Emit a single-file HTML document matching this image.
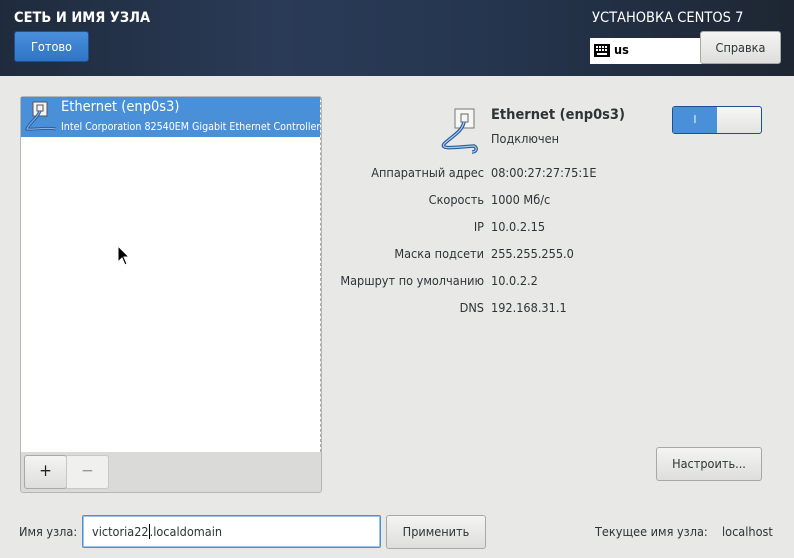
<!DOCTYPE html>
<html><head><meta charset="utf-8"><style>
*{margin:0;padding:0;box-sizing:border-box}
body{width:794px;height:558px;overflow:hidden;background:#e8e8e7;font-family:"DejaVu Sans Condensed","DejaVu Sans","Liberation Sans",sans-serif;font-stretch:condensed;color:#2e3436;position:relative;font-size:12.6px}
.a{position:absolute;white-space:nowrap}
#hdr{position:absolute;left:0;top:0;width:794px;height:76px;background:linear-gradient(90deg,#1f2b3d 0%,#2a3b57 35%,#253650 60%,#1e2632 100%)}
.btn{position:absolute;border:1px solid #a8a8a5;border-radius:3px;background:linear-gradient(#f4f4f3,#dededc);text-align:center;color:#2e3436;font-size:12.6px}
.lbl{position:absolute;right:310px;text-align:right;white-space:nowrap}
.val{position:absolute;left:491px;white-space:nowrap}
</style></head><body>
<div id="hdr"></div>
<div class="a" style="left:14px;top:10px;color:#fff;font-size:14.5px;font-weight:bold">СЕТЬ И ИМЯ УЗЛА</div>
<div class="a" style="left:14px;top:31px;width:75px;height:31px;background:linear-gradient(#4a8fdc,#2f74c6);border:1px solid #1f4f8f;border-radius:3px;color:#fff;text-align:center;line-height:29px">Готово</div>
<div class="a" style="left:592px;top:10px;color:#fff;font-size:14.5px">УСТАНОВКА CENTOS 7</div>
<div class="a" style="left:590px;top:38px;width:112px;height:26px;background:#fff"></div>
<svg class="a" style="left:594px;top:44px" width="16" height="13"><rect width="16" height="13" fill="#000"/><g fill="#fff"><rect x="2" y="2" width="2" height="2"/><rect x="5" y="2" width="2" height="2"/><rect x="8" y="2" width="2" height="2"/><rect x="11" y="2" width="2" height="2"/><rect x="2" y="5" width="2" height="2"/><rect x="5" y="5" width="2" height="2"/><rect x="8" y="5" width="2" height="2"/><rect x="11" y="5" width="2" height="2"/><rect x="3" y="9" width="10" height="2"/></g></svg>
<div class="a" style="left:614px;top:42px;font-weight:bold;color:#000">us</div>
<div class="btn" style="left:700px;top:31px;width:81px;height:33px;line-height:31px">Справка</div>

<div class="a" style="left:20px;top:96px;width:302px;height:397px;border:1px solid #b6b6b3;border-radius:3px;background:#dadad8"></div>
<div class="a" style="left:21px;top:97px;width:300px;height:355px;background:#fff;border-right:1px dashed #aaa"></div>
<div class="a" style="left:21px;top:97px;width:299px;height:40px;background:#4a90d9"></div>
<svg class="a" style="left:23px;top:99px" width="36" height="34"><rect x="10" y="3" width="14" height="14" fill="#f4f4f4" stroke="#555"/><rect x="14" y="6" width="6" height="6" fill="none" stroke="#555"/><path d="M17 12 C14 20 6 24 4 30 C10 31 22 28 33 30" fill="none" stroke="#2a5d9c" stroke-width="3"/><path d="M17 12 C14 20 6 24 4 30 C10 31 22 28 33 30" fill="none" stroke="#8fb7e6" stroke-width="1"/></svg>
<div class="a" style="left:61px;top:99px;color:#fff;font-size:14.5px">Ethernet (enp0s3)</div>
<div class="a" style="left:61px;top:121px;color:#fff;font-size:10.6px;width:259px;overflow:hidden">Intel Corporation 82540EM Gigabit Ethernet Controller</div>
<div class="btn" style="left:24px;top:455px;width:43px;height:34px;line-height:31px;font-size:17px;color:#222">+</div>
<div class="a" style="left:66px;top:455px;width:43px;height:34px;border:1px solid #c8c8c6;border-radius:0 3px 3px 0;background:#f0f0ef;text-align:center;line-height:31px;font-size:17px;color:#999">−</div>
<svg class="a" style="left:117px;top:245px" width="14" height="22"><path d="M1 1 L1 17 L5 13 L8 20 L10 19 L7 12 L12 12 Z" fill="#000" stroke="#fff" stroke-width="1"/></svg>

<svg class="a" style="left:436px;top:106px" width="56" height="50"><rect x="19" y="3" width="19" height="19" fill="#f6f6f6" stroke="#777"/><rect x="25" y="8" width="7" height="8" fill="none" stroke="#666"/><path d="M28 16 C26 26 16 30 8 38 C4 44 22 41 38 40 C42 42 40 46 36 46" fill="none" stroke="#2a5d9c" stroke-width="3.5"/><path d="M28 16 C26 26 16 30 8 38 C4 44 22 41 38 40 C42 42 40 46 36 46" fill="none" stroke="#a9c8ec" stroke-width="1.2"/></svg>
<div class="a" style="left:491px;top:107px;font-size:14.5px;font-weight:bold">Ethernet (enp0s3)</div>
<div class="a" style="left:491px;top:131px">Подключен</div>
<div class="a" style="left:672px;top:106px;width:90px;height:28px;border:1px solid #1f4f8f;border-radius:3px;overflow:hidden;background:linear-gradient(#f7f7f6,#e3e3e1)">
<div style="width:44px;height:26px;background:#4a90d9;color:#fff;text-align:center;line-height:26px;font-size:11px">I</div></div>

<div class="lbl" style="top:165px">Аппаратный адрес</div><div class="val" style="top:165px">08:00:27:27:75:1E</div>
<div class="lbl" style="top:192px">Скорость</div><div class="val" style="top:192px">1000 Мб/с</div>
<div class="lbl" style="top:219px">IP</div><div class="val" style="top:219px">10.0.2.15</div>
<div class="lbl" style="top:246px">Маска подсети</div><div class="val" style="top:246px">255.255.255.0</div>
<div class="lbl" style="top:273px">Маршрут по умолчанию</div><div class="val" style="top:273px">10.0.2.2</div>
<div class="lbl" style="top:300px">DNS</div><div class="val" style="top:300px">192.168.31.1</div>

<div class="btn" style="left:656px;top:447px;width:106px;height:34px;line-height:32px">Настроить...</div>
<div class="a" style="left:19px;top:524px">Имя узла:</div>
<div class="a" style="left:82px;top:515px;width:299px;height:33px;background:#fff;border:1px solid #4a90d9;border-radius:2px;box-shadow:inset 0 0 0 1px #9cc3ec;padding-left:9px;line-height:31px">victoria22<span style="border-left:1px solid #000"></span>.localdomain</div>
<div class="btn" style="left:386px;top:515px;width:100px;height:34px;line-height:32px">Применить</div>
<div class="a" style="left:595px;top:524px">Текущее имя узла:</div>
<div class="a" style="left:722px;top:524px">localhost</div>
</body></html>
